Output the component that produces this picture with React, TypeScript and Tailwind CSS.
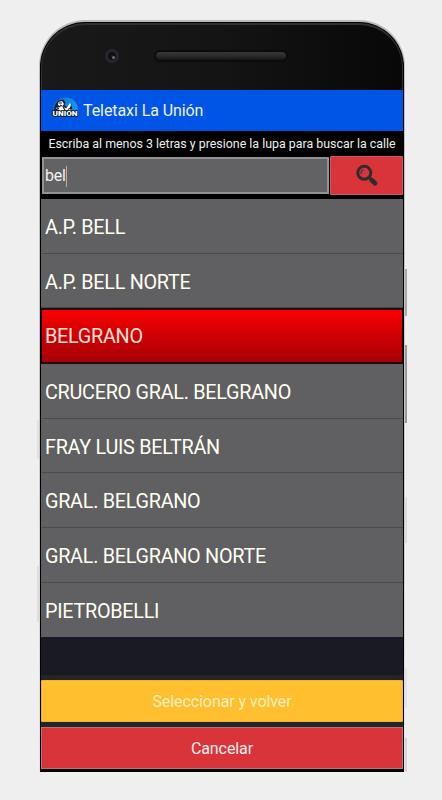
import React from 'react';

type Row = { name: string; height: string; selected?: boolean };

const streets: Row[] = [
  { name: 'A.P. BELL', height: 'h-[55px] pt-[3px]' },
  { name: 'A.P. BELL NORTE', height: 'h-[54px] pt-[4px]' },
  { name: 'BELGRANO', height: 'h-[56px] pt-px', selected: true },
  { name: 'CRUCERO GRAL. BELGRANO', height: 'h-[55px] pt-[3px]' },
  { name: 'FRAY LUIS BELTRÁN', height: 'h-[54px] pt-[4px]' },
  { name: 'GRAL. BELGRANO', height: 'h-[55px] pt-[3px]' },
  { name: 'GRAL. BELGRANO NORTE', height: 'h-[55px] pt-[3px]' },
  { name: 'PIETROBELLI', height: 'h-[54px] pt-[3px]' },
];

function Logo() {
  return (
    <svg className="mt-[-5px] h-[24px] w-[28px] shrink-0" viewBox="0 0 28 24">
      <defs>
        <linearGradient id="logoBlue" x1="0" y1="0" x2="1" y2="0">
          <stop offset="0" stopColor="#126cbd" />
          <stop offset="1" stopColor="#1497f6" />
        </linearGradient>
      </defs>
      <path d="M2 15C2 6 7 1.500 14.500 1.500S27 7 27 14V17H2Z" fill="url(#logoBlue)" />
      <path d="M4 9L7 4.500L12 3.500L14.500 6.500L13.500 9.500L16 11L20 7.500L21 12L16 15L3 14Z" fill="#102234" />
      <path d="M7.500 6L11 5L13 8L10.500 11L7 9ZM12 10.500L15 12.500L19 7L20 9L18 14L9 15L4.500 12Z" fill="#fff" />
      <path d="M8 7H11M9 9L11 10M12 11L14 14M6 12L8 13" stroke="#101820" strokeWidth="1.100" />
      <text x="1.500" y="20" textLength="25" lengthAdjust="spacingAndGlyphs" fill="#fff" stroke="#071424" strokeWidth="1.600" paintOrder="stroke" fontFamily="Roboto, sans-serif" fontSize="7.800" fontWeight="900">UNIÓN</text>
    </svg>
  );
}

function SearchIcon() {
  return (
    <svg className="mt-px h-[24px] w-[24px]" viewBox="0 0 24 24" fill="none">
      <circle cx="9.300" cy="8.800" r="6.500" stroke="#302c2e" strokeWidth="3" />
      <path d="M14 13.500L16 15.500" stroke="#302c2e" strokeWidth="2.500" />
      <path d="M16.600 16L20 19.200" stroke="#302c2e" strokeWidth="4.800" strokeLinecap="round" />
      <path d="M6 9.800Q5.700 6.700 8.600 5.700" stroke="#3a3033" strokeWidth="1.100" />
    </svg>
  );
}

export default function App() {
  return (
    <main className="h-[800px] w-[442px] overflow-hidden bg-[#efefef] pl-[39px] pt-[20px] font-['Roboto',sans-serif]">
      <div className="relative h-[752px] w-[366px]">
        <i className="absolute left-[366px] top-[249px] h-[47px] w-[2px] bg-[#aaa8aa]" />
        <i className="absolute left-[366px] top-[325px] h-[78px] w-[2px] bg-[#9b999b]" />
        <i className="absolute left-[366px] top-[477px] h-[46px] w-[2px] bg-[#dddcdf]" />
        <i className="absolute left-[366px] top-[648px] h-[40px] w-[2px] bg-[#e4e2e7]" />
        <i className="absolute left-[366px] top-[718px] h-[34px] w-[2px] bg-[#d4d3d7]" />
        <i className="absolute left-[-2px] top-[400px] h-[38px] w-[2px] bg-[#e1e0e2]" />
        <i className="absolute left-[-2px] top-[546px] h-[56px] w-[2px] bg-[#dedde0]" />
        <div className="h-full rounded-t-[46px] bg-gradient-to-b from-[#bbb] via-[#c9c9c9] to-[#e5e5e5] px-px pt-[2px]">
          <div className="flex h-full flex-col overflow-hidden rounded-t-[45px] bg-black px-px">
            <div className="mt-px flex h-[67px] shrink-0 items-start rounded-t-[44px] border-x border-t-2 border-[#303030] bg-gradient-to-r from-[#191919] via-[#141414] to-[#080808]">
              <div className="ml-[63px] mt-[24px] flex h-[14px] w-[14px] items-center justify-center rounded-full bg-[#29272b]">
                <div className="flex h-[8px] w-[8px] items-end justify-end rounded-full bg-[#121018] pb-px pr-px">
                  <div className="h-[3px] w-[3px] rounded-full bg-[#766c82]" />
                </div>
              </div>
              <div className="ml-[35px] mt-[25px] h-[12px] w-[134px] rounded-full border-2 border-[#0b0b0b] bg-gradient-to-b from-[#373737] via-[#2b2b2b] to-[#151515]" />
            </div>
            <header className="flex h-[41px] shrink-0 items-center bg-[#0055e7] pl-[10px]">
              <Logo />
              <h1 className="ml-[4px] whitespace-nowrap text-[16px] font-normal leading-5 tracking-[-0.080px] text-[#eff2ff]">Teletaxi La Unión</h1>
            </header>
            <p className="flex h-[25px] shrink-0 items-center justify-center whitespace-nowrap pt-px text-[12.400px] text-[#eee]">Escriba al menos 3 letras y presione la lupa para buscar la calle</p>
            <div className="flex h-[43px] shrink-0 items-start">
              <div className="ml-px mt-px flex h-[37px] w-[287px] items-center border-2 border-[#929292] bg-[#626163] pl-px pt-px text-[16px] tracking-[-0.200px] text-[#f2f2f2]">
                bel<span className="h-[21px] w-px bg-[#b0b0b0]" />
              </div>
              <button aria-label="Buscar" className="ml-px flex h-[39px] w-[73px] items-center justify-center rounded-[1px] border border-[#be6065] bg-[#d8343a]">
                <SearchIcon />
              </button>
            </div>
            <ul className="flex shrink-0 flex-col">
              {streets.map((s) => (
                <li
                  key={s.name}
                  className={`${s.height} flex items-center whitespace-nowrap text-[19.800px] tracking-[-0.270px] ${
                    s.selected
                      ? 'border-y-2 border-x border-[#1d0606] bg-gradient-to-b from-[#f90000] to-[#a50006] pl-[3px] text-[#ffe3d8]'
                      : 'border-b border-[#4a4a4b] bg-[#606062] pl-[4px] text-[#fffff2] last:border-b-0'
                  }`}
                >
                  {s.name}
                </li>
              ))}
            </ul>
            <div className="h-[38px] shrink-0 bg-[#1a1a24]" />
            <footer className="flex h-[94px] shrink-0 flex-col bg-[#252525] pt-[5px]">
              <button className="h-[42px] w-full shrink-0 rounded-[1px] border border-[#edb23a] bg-[#ffbf2f] pt-[2px] text-[16px] tracking-[-0.080px] text-[#fff1bd]">Seleccionar y volver</button>
              <button className="mt-[5px] h-[42px] w-full shrink-0 border border-[#b87278] bg-[#d8343a] pt-[2px] text-[16px] tracking-[-0.080px] text-[#fff0ee]">Cancelar</button>
            </footer>
          </div>
        </div>
      </div>
    </main>
  );
}
